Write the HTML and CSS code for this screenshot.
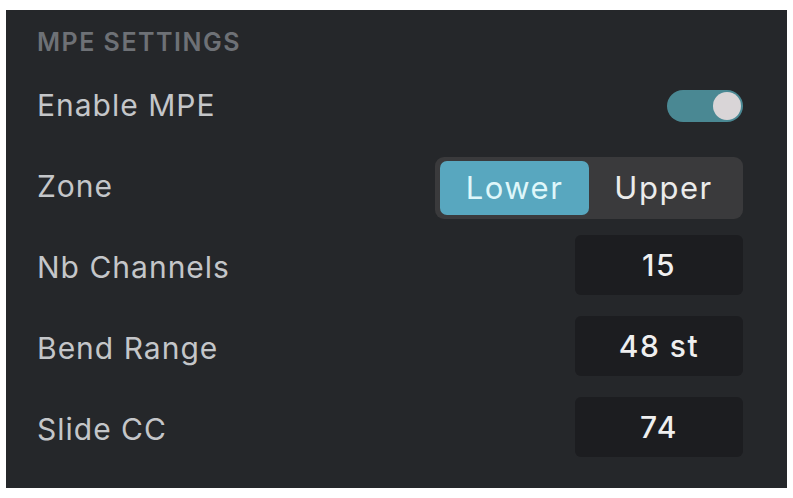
FILE: index.html
```html
<!DOCTYPE html>
<html>
<head>
<meta charset="utf-8">
<link rel="stylesheet" href="styles.css">
</head>
<body>
<div class="panel">
  <div class="header">MPE SETTINGS</div>
  <div class="row">
    <span class="label">Enable MPE</span>
    <div class="toggle"><div class="knob"></div></div>
  </div>
  <div class="row">
    <span class="label">Zone</span>
    <div class="segmented">
      <div class="seg active">Lower</div>
      <div class="seg">Upper</div>
    </div>
  </div>
  <div class="row">
    <span class="label">Nb Channels</span>
    <div class="value">15</div>
  </div>
  <div class="row">
    <span class="label">Bend Range</span>
    <div class="value">48 st</div>
  </div>
  <div class="row">
    <span class="label">Slide CC</span>
    <div class="value">74</div>
  </div>
</div>
</body>
</html>
```

FILE: styles.css
```css
html, body {
  margin: 0;
  padding: 0;
  background: #ffffff;
}
body {
  padding: 10px 6px 10px 6px;
  font-family: Inter, "Noto Sans", sans-serif;
}
.panel {
  width: 781px;
  height: 478px;
  background: #25272a;
  box-sizing: border-box;
  padding: 0 44px 0 31px;
  display: flex;
  flex-direction: column;
}
.header {
  height: 54px;
  display: flex;
  align-items: center;
  padding-top: 10px;
  box-sizing: border-box;
  color: #6e7176;
  font-size: 25px;
  font-weight: 600;
  letter-spacing: 1.5px;
}
.row {
  height: 81px;
  display: flex;
  align-items: center;
  justify-content: space-between;
}
.label {
  color: #c4c6c9;
  font-size: 30px;
  letter-spacing: 1px;
}
.toggle {
  width: 76px;
  height: 32px;
  border-radius: 16px;
  background: #4a8893;
  display: flex;
  align-items: center;
  justify-content: flex-end;
  padding: 2px;
  box-sizing: border-box;
  margin-top: 3px;
}
.knob {
  width: 28px;
  height: 28px;
  border-radius: 50%;
  background: #d9d5d7;
}
.segmented {
  width: 308px;
  height: 62px;
  background: #3a3a3c;
  border-radius: 9px;
  padding: 4px 5px;
  box-sizing: border-box;
  display: flex;
  margin-top: 4px;
}
.seg {
  flex: 1;
  display: flex;
  align-items: center;
  justify-content: center;
  color: #ebebeb;
  font-size: 31px;
  letter-spacing: 1.5px;
  border-radius: 7px;
}
.seg.active {
  background: #58a7bf;
  color: #dff7fa;
}
.value {
  width: 168px;
  height: 60px;
  background: #1c1d20;
  border-radius: 6px;
  display: flex;
  align-items: center;
  justify-content: center;
  color: #efefef;
  font-size: 30px;
  font-weight: 500;
  letter-spacing: 1.5px;
  margin-top: -3px;
}
```
